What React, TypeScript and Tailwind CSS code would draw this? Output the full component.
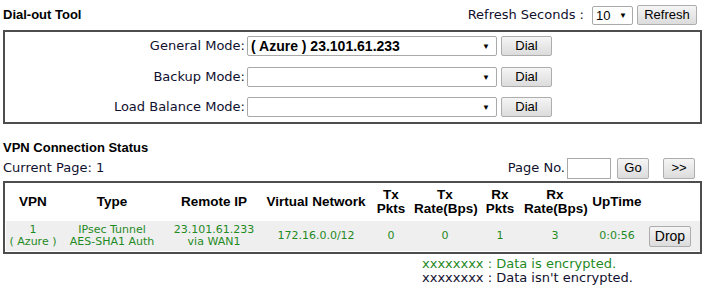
import * as React from "react";

const btn =
  "flex items-center justify-center border border-[#adadad] rounded-[2px] bg-gradient-to-b from-[#f5f5f5] to-[#dcdcdc] text-[13px] text-black font-['Liberation_Sans',Arial,sans-serif]";

function Select({ value, w }: { value?: string; w: string }) {
  return (
    <div className={`${w} h-[20px] flex items-center justify-between border border-[#a9a9a9] rounded-[2px] bg-white pl-[3px] pr-[6px]`}>
      <span className="font-['Liberation_Sans',Arial,sans-serif] font-bold text-[14px] text-black leading-none">{value}</span>
      <span className="text-[8px] text-black leading-none">▼</span>
    </div>
  );
}

const heads = [
  ["VPN"],
  ["Type"],
  ["Remote IP"],
  ["Virtual Network"],
  ["Tx", "Pkts"],
  ["Tx", "Rate(Bps)"],
  ["Rx", "Pkts"],
  ["Rx", "Rate(Bps)"],
  ["UpTime"],
  [],
];

const row = [
  ["1", "( Azure )"],
  ["IPsec Tunnel", "AES-SHA1 Auth"],
  ["23.101.61.233", "via WAN1"],
  ["172.16.0.0/12"],
  ["0"],
  ["0"],
  ["1"],
  ["3"],
  ["0:0:56"],
];

const cols = "grid grid-cols-[54px_104px_100px_104px_46px_62px_48px_62px_62px_44px]";

export default function App() {
  const label = "font-['DejaVu_Sans',Verdana,sans-serif] text-[13px] text-[#10102e]";
  return (
    <div className="w-[714px] h-[303px] bg-white relative overflow-hidden">
      {/* Dial-out tool header */}
      <div className="h-[30px] flex items-center justify-between pl-[3px] pr-[17px]">
        <span className="font-['Liberation_Sans',Arial,sans-serif] font-bold text-[13px] text-black">Dial-out Tool</span>
        <div className="flex items-center">
          <span className={label}>Refresh Seconds :</span>
          <div className="ml-[8px] w-[41px] h-[19px] flex items-center justify-between border border-[#a9a9a9] rounded-[2px] bg-white pl-[3px] pr-[5px]">
            <span className="font-['Liberation_Sans',Arial,sans-serif] text-[13px] text-black leading-none">10</span>
            <span className="text-[8px] text-black leading-none">▼</span>
          </div>
          <button className={`${btn} ml-[4px] w-[60px] h-[20px]`}>Refresh</button>
        </div>
      </div>

      <div className="ml-[3px] w-[699px] h-[94px] border-2 border-[#4d4d4d] pt-[4px] flex flex-col">
        {[
          ["General Mode:", "( Azure ) 23.101.61.233"],
          ["Backup Mode:", ""],
          ["Load Balance Mode:", ""],
        ].map(([l, v], i) => (
          <div key={l} className={`flex items-center h-[20px] ${i === 1 ? "mt-[11px]" : i === 2 ? "mt-[10px]" : ""}`}>
            <span className={`${label} w-[240px] text-right`}>{l}</span>
            <div className="ml-[2px]">
              <Select value={v} w="w-[250px]" />
            </div>
            <button className={`${btn} ml-[4px] w-[51px] h-[20px]`}>Dial</button>
          </div>
        ))}
      </div>

      {/* VPN status */}
      <div className="mt-[16px] pl-[3px] font-['Liberation_Sans',Arial,sans-serif] font-bold text-[13px] text-black leading-[16px]">
        VPN Connection Status
      </div>
      <div className="h-[24px] flex items-center justify-between pl-[3px] pr-[19px]">
        <span className={label}>Current Page: 1</span>
        <div className="flex items-center">
          <span className={label}>Page No.</span>
          <div className="ml-[2px] w-[44px] h-[21px] border border-[#a9a9a9] bg-white" />
          <button className={`${btn} ml-[6px] w-[32px] h-[21px]`}>Go</button>
          <button className={`${btn} ml-[14px] w-[32px] h-[21px] text-[11px]`}>&gt;&gt;</button>
        </div>
      </div>

      <div className="mt-[1px] ml-[3px] w-[699px] h-[73px] border-2 border-[#4d4d4d] pl-[1px]">
        <div className={`${cols} h-[38px] items-center`}>
          {heads.map((h, i) => (
            <div key={i} className="text-center font-['Liberation_Sans',Arial,sans-serif] font-bold text-[13.5px] text-black leading-[14px]">
              {h.map((t) => (
                <div key={t}>{t}</div>
              ))}
            </div>
          ))}
        </div>
        <div className={`${cols} h-[30px] items-center bg-[#efefef]`}>
          {row.map((c, i) => (
            <div key={i} className="text-center font-['DejaVu_Sans',Verdana,sans-serif] text-[11px] text-[#1f8a1f] leading-[12px]">
              {c.map((t) => (
                <div key={t}>{t}</div>
              ))}
            </div>
          ))}
          <div className="flex justify-center">
            <button className={`${btn} w-[42px] h-[21px] text-[14px]`}>Drop</button>
          </div>
        </div>
      </div>

      <div className="pl-[422px] pt-[3px] font-['DejaVu_Sans',Verdana,sans-serif] text-[13px] leading-[14px]">
        <div className="text-[#1f8a1f]">xxxxxxxx : Data is encrypted.</div>
        <div className="text-[#10102e]">xxxxxxxx : Data isn't encrypted.</div>
      </div>
    </div>
  );
}
